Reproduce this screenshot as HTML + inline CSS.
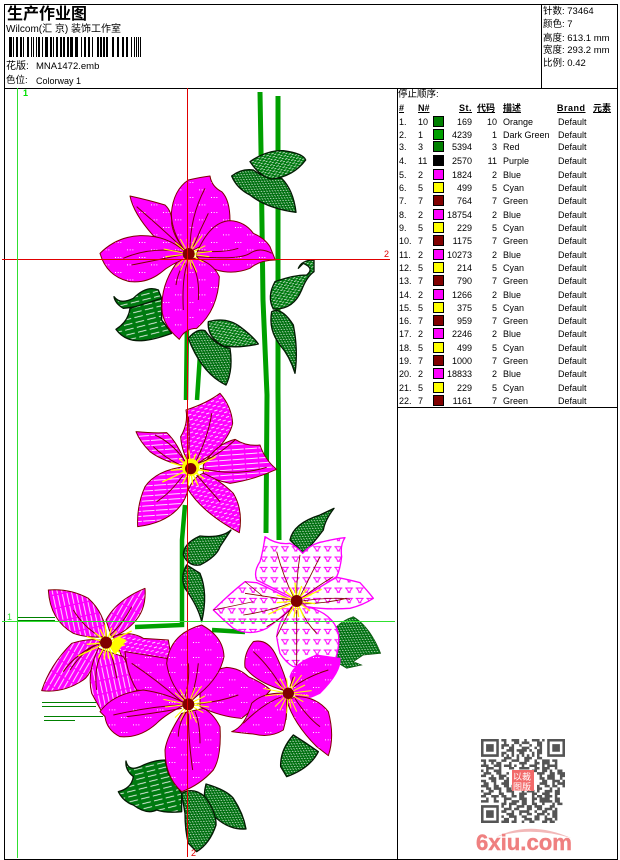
<!DOCTYPE html>
<html><head><meta charset="utf-8"><style>
html,body{margin:0;padding:0;background:#fff}
#p{position:relative;width:620px;height:860px;overflow:hidden;background:#fff;font:9px/12px "Liberation Sans","Noto Sans CJK SC",sans-serif;color:#000}
#p div{position:absolute;white-space:pre}
.r{left:0;width:620px;height:12px}
.r span{position:absolute;top:0}
.a{left:399px}.b{left:418px}.s{left:433px;top:0px!important;width:9px;height:9px;border:1px solid #000}
.c{right:148px}.d{right:123px}.e{left:503px}.f{left:558px}
.h{font-weight:bold;text-decoration:underline}
svg{position:absolute;left:0;top:0}
svg svg{position:static}
</style></head><body><div id="p">
<svg width="620" height="860" viewBox="0 0 620 860">
<defs>
<pattern id="dots" patternUnits="userSpaceOnUse" width="72" height="45"><rect width="72" height="45" fill="#f0f"/><path d="M3 6h3v3H3zM11 6h3v3h-3zM19 6h3v3h-3zM39 28h3v3h-3zM47 28h3v3h-3zM55 28h3v3h-3z" fill="#fff"/></pattern>
<pattern id="hs" patternUnits="userSpaceOnUse" width="40" height="15" patternTransform="rotate(-4)"><rect width="40" height="15" fill="#f0f"/><rect y="6" width="36" height="2.600" fill="#fff"/></pattern>
<pattern id="hd" patternUnits="userSpaceOnUse" width="26" height="15" patternTransform="rotate(-20)"><rect width="26" height="15" fill="#f0f"/><path d="M0 3h10v2.500H0zM13 10h10v2.500H13z" fill="#fff"/></pattern>
<pattern id="vs" patternUnits="userSpaceOnUse" width="14" height="40" patternTransform="rotate(-12)"><rect width="14" height="40" fill="#f0f"/><rect x="5" width="2.600" height="36" fill="#fff"/></pattern>
<pattern id="vs2" patternUnits="userSpaceOnUse" width="14" height="40" patternTransform="rotate(30)"><rect width="14" height="40" fill="#f0f"/><rect x="5" width="2.600" height="36" fill="#fff"/></pattern>
<pattern id="yy" patternUnits="userSpaceOnUse" width="32" height="31"><rect width="32" height="31" fill="#fff"/><path d="M3 4h24M6 4l8 12M24 4l-7 12M11 17h9" stroke="#f0f" stroke-width="3" fill="none"/></pattern>
<pattern id="l1" patternUnits="userSpaceOnUse" width="36" height="15" patternTransform="rotate(-14)"><rect width="36" height="15" fill="#007a10"/><path d="M0 5h26" stroke="#fff" stroke-width="2.500"/></pattern>
<pattern id="l2" patternUnits="userSpaceOnUse" width="16" height="10" patternTransform="rotate(-22)"><rect width="16" height="10" fill="#007a10"/><path d="M0 2h8M8 7h6" stroke="#fff" stroke-width="2.200"/></pattern>
<pattern id="l3" patternUnits="userSpaceOnUse" width="14" height="9" patternTransform="rotate(30)"><rect width="14" height="9" fill="#007010"/><path d="M0 2h5M7 6.500h5" stroke="#fff" stroke-width="2"/></pattern>
<g id="ra" fill="none" stroke="#ff0" stroke-width="3"><path d="M0 0L70 -8M0 0L62 8M0 0L45 25M0 0L25 55M0 0L8 45M0 0L-5 60M0 0L-25 50M0 0L-40 40M0 0L-70 8M0 0L-75 -15M0 0L-40 -35M0 0L-25 -45M0 0L-5 -45M0 0L20 -50M0 0L40 -55M0 0L50 -25"/></g>
<g id="rb" fill="none" stroke="#ff0" stroke-width="4"><path d="M0 0L75 -35M0 0L55 8M0 0L40 30M0 0L22 50M0 0L6 48M0 0L-8 50M0 0L-25 45M0 0L-85 40M0 0L-60 5M0 0L-60 -18M0 0L-35 -30M0 0L-20 -40M0 0L-5 -55M0 0L15 -45M0 0L30 -35M0 0L45 -20"/></g>
</defs>

<!-- stems -->
<g fill="none" stroke="#00a000" stroke-width="5">
<path d="M260 92L261 150 263 300 267 395 266 533"/>
<path d="M278 96L278 390 279 540"/>
<path d="M187 320L186 400M185 505L182 540 182 625 135 627" stroke-width="4.500"/>
<path d="M200 355L197 400M212 630L245 632" stroke-width="4.500"/>
</g>
<g fill="none" stroke="#008000" stroke-width="1" shape-rendering="crispEdges">
<path d="M18 617.500H55M18 620.500H55M42 702.500H96M42 706.500H96M44 716.500H103M44 720.500H75"/>
</g>

<!-- upper section -->
<g transform="translate(90 90) scale(.33333)">
<g stroke="#041a04" stroke-width="4" stroke-linejoin="round">
<path fill="url(#l3)" d="M425 258Q455 235 490 240Q520 265 575 265Q610 300 618 367Q530 355 480 315Q440 295 425 258z"/>
<path fill="url(#l2)" d="M480 215Q530 180 580 182Q640 190 647 210Q610 260 545 267Q510 260 480 215z"/>
<path fill="url(#l2)" d="M625 535Q635 510 672 510L672 545Q650 560 635 600Q610 660 550 657Q530 620 555 575Q610 555 650 555Q675 535 640 520z"/>
<path fill="url(#l3)" d="M545 665Q575 650 610 705Q625 780 615 850Q600 800 570 765Q535 720 545 665z"/>
<path fill="url(#l1)" d="M72 620Q90 645 130 625Q170 585 205 600L215 625Q160 650 100 655Q75 640 72 620z"/>
<path fill="url(#l1)" d="M78 718Q115 695 120 655L215 625L215 690L245 730Q190 750 155 752Q105 755 78 718z"/>
<path fill="url(#l3)" d="M295 745Q320 715 345 722Q380 770 420 775Q430 840 408 885Q335 850 295 745z"/>
<path fill="url(#l2)" d="M355 695Q410 680 450 710Q490 740 505 762Q450 775 400 768Q350 740 355 695z"/>
</g>
<g fill="url(#dots)" stroke="#800000" stroke-width="3" stroke-linejoin="round">
<path d="M285 480Q250 440 245 400Q247 365 225 345Q175 330 120 318Q130 370 190 437z"/>
<path d="M290 490Q245 430 244 370Q250 300 295 270Q330 262 360 258Q365 290 395 305Q420 330 420 392Q370 430 330 470z"/>
<path d="M320 490Q360 395 420 392Q465 395 490 430Q525 445 540 470L556 510Q510 510 480 535Q430 555 380 540Q340 525 320 500z"/>
<path d="M270 505Q218 570 216 640Q210 700 268 748Q285 715 320 715Q385 660 388 560Q370 520 320 505z"/>
<path d="M30 490Q80 440 150 437Q230 435 285 485L290 505Q245 520 210 550Q170 580 120 575Q50 560 30 490z"/>
</g>
<g fill="none" stroke="#800000" stroke-width="3">
<path d="M285 480Q220 420 180 385T140 350M300 480Q300 380 345 295M310 470Q330 420 355 370M320 482Q400 490 445 475M320 500Q450 510 480 490T545 490M275 485Q180 470 100 505M275 495Q200 510 125 525M295 510Q275 560 280 660M305 520Q330 560 325 630M285 520Q265 540 258 585"/>
</g>
<use href="#ra" x="296" y="492"/>
<circle cx="296" cy="492" r="18" fill="#800000"/>
</g>

<!-- middle section -->
<g transform="translate(120 380) scale(.33333)">
<g stroke="#041a04" stroke-width="4" stroke-linejoin="round">
<path fill="url(#l3)" d="M333 450Q305 475 240 468Q190 490 190 525Q205 560 240 555Q290 530 300 500z"/>
<path fill="url(#l3)" d="M200 555Q180 590 195 625Q235 680 245 725Q265 640 240 580z"/>
<path fill="url(#l3)" d="M510 480Q520 430 600 405L642 385Q615 420 610 450Q580 490 550 520z"/>
</g>
<g stroke="#800000" stroke-width="3" stroke-linejoin="round">
<path fill="url(#hd)" d="M215 262Q185 220 182 170Q205 130 198 90Q260 70 300 40Q335 80 338 130Q330 170 280 220z"/>
<path fill="url(#hs)" d="M250 255Q290 190 345 178Q380 200 420 195Q435 240 470 268Q400 300 330 310Q280 300 250 280z"/>
<path fill="url(#hd)" d="M205 330Q250 400 358 458Q370 390 340 340Q300 300 250 280Q220 290 205 330z"/>
<path fill="url(#hs)" d="M48 155Q100 160 140 158Q175 190 200 260Q130 245 90 215Q60 185 48 155z"/>
<path fill="url(#hs)" d="M195 260Q110 270 75 320Q50 375 53 440Q130 430 170 390Q200 360 205 320z"/>
</g>
<g fill="none" stroke="#800000" stroke-width="3">
<path d="M200 250Q160 190 105 165M225 250Q265 170 275 100M205 240Q210 170 205 110M240 265Q350 290 440 262M235 250Q290 230 345 180M230 285Q270 330 300 365M190 285Q150 340 110 365M180 255Q130 230 100 200"/>
</g>
<circle cx="212" cy="262" r="26" fill="#ff0"/>
<use href="#rb" x="212" y="266"/>
<circle cx="212" cy="266" r="17" fill="#800000"/>
</g>

<!-- rear leaf of flower 3 -->
<g transform="translate(0 580) scale(.33333)">
<path stroke="#0a500a" stroke-width="2" fill="url(#l3)" d="M1010 140Q1030 120 1060 110Q1110 140 1142 220L1090 225L1060 245L1085 255L1040 265L990 235Q1020 200 1010 140z"/>
</g>

<!-- flower 3 -->
<g transform="translate(120 380) scale(.33333)">
<g fill="url(#yy)" stroke="#f0f" stroke-width="4" stroke-linejoin="round">
<path d="M530 670Q480 700 470 770Q475 800 480 820Q500 850 520 860L600 850Q640 850 645 840Q660 800 655 760Q640 700 560 680z"/>
<path d="M530 660L410 600Q400 575 420 545Q430 510 435 470Q470 495 510 490Q530 500 548 520Q575 490 610 485Q650 475 675 473Q660 495 665 530Q660 570 650 590Q590 630 530 660z"/>
<path d="M540 660Q600 620 650 592Q690 600 720 608Q745 635 760 655Q730 675 690 685Q620 690 560 680z"/>
<path d="M525 665Q460 630 410 608L375 605Q330 640 280 690Q310 720 340 745Q390 770 440 745Q490 710 525 670z"/>
</g>
<g fill="none" stroke="#800000" stroke-width="2.500">
<path d="M520 650Q490 590 470 515M530 645Q530 590 540 525M540 650Q570 590 600 530M545 655Q590 620 640 590M550 662Q650 650 690 658M545 672Q620 670 680 655M510 660Q440 650 375 640M510 670Q440 695 370 705M520 680Q480 720 440 740M530 690Q530 760 530 860M540 685Q560 730 590 760M515 680Q490 730 470 770"/>
<path d="M375 605L430 650M280 690L400 665" stroke-width="2"/>
</g>
<use href="#rb" x="530" y="663"/>
<circle cx="530" cy="663" r="18" fill="#800000"/>
</g>

<!-- lower section -->
<g transform="translate(0 580) scale(.33333)">
<g stroke="#041a04" stroke-width="4" stroke-linejoin="round">
<path fill="url(#l1)" d="M378 543Q385 575 420 560Q460 540 495 540L505 580L545 640L545 695Q500 700 470 690Q440 705 400 675Q370 665 355 635Q395 625 400 590Q375 570 378 543z"/>
<path fill="url(#l3)" d="M618 612Q680 630 700 655Q730 700 738 747Q690 750 650 715Q600 680 618 612z"/>
<path fill="url(#l3)" d="M545 640Q580 620 615 650Q650 700 648 735Q630 790 590 815L565 790Q555 750 555 700z"/>
<path fill="url(#l3)" d="M880 465Q840 510 842 560L860 590Q930 565 955 515Q920 490 880 465z"/>
</g>
<!-- flower 4 -->
<g stroke="#800000" stroke-width="3" stroke-linejoin="round">
<path fill="url(#vs)" d="M145 30Q210 25 265 55Q315 100 320 170Q260 175 220 160Q150 120 145 30z"/>
<path fill="url(#vs2)" d="M318 120Q350 60 435 25Q440 90 400 130Q370 160 335 172z"/>
<path fill="url(#hd)" d="M340 170Q390 150 430 175L505 180L515 240L370 240z"/>
<path fill="url(#vs2)" d="M125 332Q150 255 215 190Q260 175 300 180Q280 280 250 300Q190 340 125 332z"/>
<path fill="url(#vs)" d="M295 205Q260 280 275 340L305 395L420 325L370 230z"/>
</g>
<g fill="none" stroke="#800000" stroke-width="3">
<path d="M300 170Q250 140 220 90M330 165Q370 130 395 80M285 195Q220 230 190 275M310 210Q280 260 290 330M330 210Q345 260 350 295M300 190Q250 210 210 270"/>
</g>
<use href="#rb" x="320" y="188"/>
<path d="M325 195L355 170 380 180 345 225z" fill="#ff0"/>
<circle cx="318" cy="188" r="18" fill="#800000"/>
<!-- flower 5 -->
<g fill="url(#dots)" stroke="#800000" stroke-width="3" stroke-linejoin="round">
<path d="M375 215Q440 225 500 235Q515 300 565 372Q470 335 410 330Q380 280 375 215z"/>
<path d="M600 340Q620 270 680 262Q720 265 745 290Q790 310 812 330Q770 380 725 415Q660 410 600 380z"/>
<path d="M565 370Q510 320 500 250Q510 160 605 135Q670 170 672 230Q660 290 600 340z"/>
<path d="M300 395Q340 340 430 330Q500 340 560 372Q500 400 470 430Q420 475 360 470Q320 450 315 410z"/>
<path d="M545 400Q500 470 495 510Q495 590 545 635Q600 615 640 570Q665 530 660 440Q640 400 610 385z"/>
</g>
<g fill="none" stroke="#800000" stroke-width="3">
<path d="M545 365Q470 300 395 250M555 350Q570 300 565 250M575 350Q590 300 595 250M590 372Q660 365 715 345M540 375Q450 380 340 405M545 385Q460 400 380 410M560 395Q535 430 535 470M565 400Q565 480 578 570M585 395Q600 430 600 490"/>
</g>
<use href="#ra" x="565" y="373"/>
<circle cx="565" cy="373" r="18" fill="#800000"/>
<!-- flower 6 -->
<path fill="url(#dots)" stroke="#f0f" stroke-width="3" d="M870 290Q880 250 950 225L1020 235Q1025 275 960 340Q920 360 890 362z"/>
<g fill="url(#dots)" stroke="#800000" stroke-width="3" stroke-linejoin="round">
<path d="M865 330Q855 280 825 220Q800 175 760 185Q730 220 735 262Q770 310 865 335z"/>
<path d="M860 360Q880 430 950 500L985 527Q1005 470 985 395Q950 350 890 350z"/>
<path d="M695 455Q735 440 755 370Q790 335 860 340Q865 400 850 450Q810 475 760 462Q730 460 695 455z"/>
</g>
<g fill="none" stroke="#800000" stroke-width="3">
<path d="M850 330Q810 260 760 215M875 325Q920 290 985 270M845 350Q790 370 730 430M885 355Q920 410 960 440M860 360Q860 400 858 420M880 290L870 320"/>
</g>
<use href="#ra" x="865" y="340"/>
<circle cx="865" cy="340" r="17" fill="#800000"/>
</g>

<!-- frame -->
<g stroke="#000" fill="none" shape-rendering="crispEdges">
<rect x="4.500" y="4.500" width="613" height="855" stroke-width="1"/>
<path d="M4 88.500H618M541.500 4V88M397.500 88V860M397 407.500H618"/>
</g>
<!-- guides -->
<g shape-rendering="crispEdges" fill="none">
<path d="M187.500 88V857M2 259.500H390" stroke="#e00000"/>
<path d="M17.500 88V858M2 621.500H395" stroke="#30e030"/>
</g>
<!-- barcode -->
<g fill="#000" shape-rendering="crispEdges">
<path d="M9 37h3v20h-3zM13 37h1v20h-1zM16 37h2v20h-2zM20 37h2v20h-2zM23 37h1v20h-1zM27 37h2v20h-2zM31 37h1v20h-1zM33 37h1v20h-1zM36 37h1v20h-1zM38 37h2v20h-2zM42 37h1v20h-1zM45 37h3v20h-3zM50 37h2v20h-2zM53 37h1v20h-1zM56 37h2v20h-2zM60 37h2v20h-2zM63 37h2v20h-2zM67 37h2v20h-2zM70 37h3v20h-3zM75 37h3v20h-3zM81 37h1v20h-1zM84 37h2v20h-2zM88 37h2v20h-2zM92 37h1v20h-1zM97 37h2v20h-2zM100 37h2v20h-2zM103 37h2v20h-2zM106 37h2v20h-2zM112 37h2v20h-2zM117 37h2v20h-2zM122 37h2v20h-2zM126 37h2v20h-2zM131 37h1v20h-1zM134 37h1v20h-1zM136 37h1v20h-1zM138 37h1v20h-1zM140 37h1v20h-1z"/>
</g>
<!-- QR -->
<svg x="481" y="739" width="84" height="84" viewBox="0 0 33 33" overflow="hidden">
<g fill="none" stroke="#555">
<path stroke-width="1" d="M.5 .5h6v6h-6zM26.500 .5h6v6h-6zM.5 26.500h6v6h-6z"/>
<path stroke-width="0" fill="#555" d="M2 2h3v3H2zM28 2h3v3h-3zM2 28h3v3H2z"/>
<path d="M8 .5h2m2 0h3m2 0h1m2 0h3m1 0h1M9 1.500h1m3 0h2m1 0h3m3 0h2M8 2.500h3m1 0h1m2 0h1m3 0h1m2 0h2M8 3.500h1m2 0h2m3 0h3m2 0h1m1 0h1M10 4.500h3m1 0h4m1 0h1m2 0h2M8 5.500h2m2 0h1m2 0h2m3 0h1m1 0h2M8 6.500h1m1 0h1m1 0h1m1 0h1m1 0h1m1 0h1m1 0h1m1 0h1M9 7.500h3m2 0h1m2 0h3m2 0h2M0 8.500h2m1 0h3m2 0h2m2 0h3m2 0h2m2 0h1m2 0h3m1 0h2M1 9.500h1m2 0h1m1 0h2m3 0h1m3 0h3m3 0h2m1 0h3m2 0h1M0 10.500h3m2 0h3m1 0h3m1 0h1m2 0h1m2 0h3m2 0h1m1 0h4M2 11.500h3m2 0h1m3 0h2m2 0h4m2 0h2m1 0h3m2 0h1M0 12.500h1m1 0h1m2 0h3m3 0m9 0h2m2 0h2m1 0h1m2 0h2M1 13.500h3m2 0h2m2 0h1m11 0h3m2 0h2m1 0h3M0 14.500h2m2 0h1m2 0h3m13 0h1m2 0h3m2 0h3M3 15.500h3m1 0h2m1 0h1m12 0h2m1 0h3m2 0h1M0 16.500h2m2 0h2m3 0h2m13 0h2m2 0h3m1 0h2M1 17.500h2m2 0h1m2 0h3m12 0h3m2 0h1m1 0h3M0 18.500h3m2 0h2m2 0h2m1 0h1m9 0h1m2 0h2m1 0h2m2 0h2M2 19.500h2m1 0h3m2 0h2m2 0h3m1 0h2m2 0h2m3 0h1m2 0h1M0 20.500h1m2 0h2m2 0h1m2 0h3m3 0h1m1 0h3m1 0h1m2 0h3m1 0h2M1 21.500h3m3 0h2m3 0h1m2 0h3m2 0h2m2 0h3m2 0h2M0 22.500h2m2 0h3m1 0h2m2 0h2m1 0h2m3 0h1m1 0h2m1 0h3m1 0h1M2 23.500h1m2 0h1m3 0h3m3 0h3m2 0h2m1 0h4m2 0h2M0 24.500h3m2 0h2m2 0h1m2 0h3m1 0h2m2 0h1m2 0h5m1 0h2M8 25.500h2m1 0h3m2 0h2m2 0h2m2 0h1m3 0h1m1 0h2M8 26.500h1m2 0h1m2 0h3m1 0h2m1 0h3m3 0h2M9 27.500h3m1 0h2m3 0h2m2 0h2m1 0h3m1 0h1M8 28.500h2m2 0h1m2 0h4m2 0h1m2 0h2m2 0h2M10 29.500h3m2 0h1m2 0h2m2 0h3m1 0h1m1 0h2M8 30.500h1m2 0h3m2 0h2m3 0h2m2 0h1m2 0h2M9 31.500h2m2 0h1m3 0h3m1 0h2m2 0h3m1 0h1M8 32.500h3m1 0h2m2 0h1m2 0h2m3 0h2m1 0h2"/>
</g>
</svg>
<rect x="512" y="770" width="22" height="21" fill="#f26a6a"/>
<text x="513" y="780" font-size="9" fill="#fff" font-family="'Noto Sans CJK SC',sans-serif">以裁</text>
<text x="513" y="790" font-size="9" fill="#fff" font-family="'Noto Sans CJK SC',sans-serif">图版</text>
<!-- logo -->
<path d="M496 837Q530 820 571 838Q530 826 496 837z" fill="#f2b8b8"/>
<text x="476" y="850" font-size="22" font-weight="bold" font-family="'Liberation Sans',sans-serif" fill="#ef8080" stroke="#ef8080" stroke-width=".4" textLength="96" lengthAdjust="spacingAndGlyphs">6xiu.com</text>
</svg>

<div style="left:7px;top:3px;font:bold 16px/18px 'Noto Sans CJK SC',sans-serif">生产作业图</div>
<div style="left:6px;top:24px;font-size:10px">Wilcom(汇 京) 装饰工作室</div>
<div style="left:6px;top:61px;font-size:10px">花版:</div>
<div style="left:36px;top:61px;font-size:9.500px">MNA1472.emb</div>
<div style="left:6px;top:75px;font-size:9.500px">色位:</div>
<div style="left:36px;top:75px;font-size:9px">Colorway 1</div>
<div style="left:543px;top:6px;font-size:9.500px">针数: 73464</div>
<div style="left:543px;top:19px;font-size:9.500px">颜色: 7</div>
<div style="left:543px;top:33px;font-size:9.500px">高度: 613.1 mm</div>
<div style="left:543px;top:45px;font-size:9.500px">宽度: 293.2 mm</div>
<div style="left:543px;top:58px;font-size:9.500px">比例: 0.42</div>
<div style="left:398px;top:89px;font-size:9.500px">停止顺序:</div>
<div class="h" style="left:399px;top:102px">#</div>
<div class="h" style="left:418px;top:102px">N#</div>
<div class="h" style="left:459px;top:102px;letter-spacing:.5px">St.</div>
<div class="h" style="left:477px;top:102px">代码</div>
<div class="h" style="left:503px;top:102px">描述</div>
<div class="h" style="left:557px;top:102px;letter-spacing:.5px">Brand</div>
<div class="h" style="left:593px;top:102px">元素</div>

<div style="left:23px;top:87px;color:#00e000;font-weight:bold">1</div>
<div style="left:384px;top:248px;color:#e00000">2</div>
<div style="left:7px;top:611px;color:#30e030">1</div>
<div style="left:191px;top:847px;color:#e00000">2</div>

<div class="r" style="top:116px"><span class="a">1.</span><span class="b">10</span><span class="s" style="background:#008000"></span><span class="c">169</span><span class="d">10</span><span class="e">Orange</span><span class="f">Default</span></div>
<div class="r" style="top:129px"><span class="a">2.</span><span class="b">1</span><span class="s" style="background:#00a000"></span><span class="c">4239</span><span class="d">1</span><span class="e">Dark Green</span><span class="f">Default</span></div>
<div class="r" style="top:141px"><span class="a">3.</span><span class="b">3</span><span class="s" style="background:#008000"></span><span class="c">5394</span><span class="d">3</span><span class="e">Red</span><span class="f">Default</span></div>
<div class="r" style="top:155px"><span class="a">4.</span><span class="b">11</span><span class="s" style="background:#000"></span><span class="c">2570</span><span class="d">11</span><span class="e">Purple</span><span class="f">Default</span></div>
<div class="r" style="top:169px"><span class="a">5.</span><span class="b">2</span><span class="s" style="background:#f0f"></span><span class="c">1824</span><span class="d">2</span><span class="e">Blue</span><span class="f">Default</span></div>
<div class="r" style="top:182px"><span class="a">6.</span><span class="b">5</span><span class="s" style="background:#ff0"></span><span class="c">499</span><span class="d">5</span><span class="e">Cyan</span><span class="f">Default</span></div>
<div class="r" style="top:195px"><span class="a">7.</span><span class="b">7</span><span class="s" style="background:#800000"></span><span class="c">764</span><span class="d">7</span><span class="e">Green</span><span class="f">Default</span></div>
<div class="r" style="top:209px"><span class="a">8.</span><span class="b">2</span><span class="s" style="background:#f0f"></span><span class="c">18754</span><span class="d">2</span><span class="e">Blue</span><span class="f">Default</span></div>
<div class="r" style="top:222px"><span class="a">9.</span><span class="b">5</span><span class="s" style="background:#ff0"></span><span class="c">229</span><span class="d">5</span><span class="e">Cyan</span><span class="f">Default</span></div>
<div class="r" style="top:235px"><span class="a">10.</span><span class="b">7</span><span class="s" style="background:#800000"></span><span class="c">1175</span><span class="d">7</span><span class="e">Green</span><span class="f">Default</span></div>
<div class="r" style="top:249px"><span class="a">11.</span><span class="b">2</span><span class="s" style="background:#f0f"></span><span class="c">10273</span><span class="d">2</span><span class="e">Blue</span><span class="f">Default</span></div>
<div class="r" style="top:262px"><span class="a">12.</span><span class="b">5</span><span class="s" style="background:#ff0"></span><span class="c">214</span><span class="d">5</span><span class="e">Cyan</span><span class="f">Default</span></div>
<div class="r" style="top:275px"><span class="a">13.</span><span class="b">7</span><span class="s" style="background:#800000"></span><span class="c">790</span><span class="d">7</span><span class="e">Green</span><span class="f">Default</span></div>
<div class="r" style="top:289px"><span class="a">14.</span><span class="b">2</span><span class="s" style="background:#f0f"></span><span class="c">1266</span><span class="d">2</span><span class="e">Blue</span><span class="f">Default</span></div>
<div class="r" style="top:302px"><span class="a">15.</span><span class="b">5</span><span class="s" style="background:#ff0"></span><span class="c">375</span><span class="d">5</span><span class="e">Cyan</span><span class="f">Default</span></div>
<div class="r" style="top:315px"><span class="a">16.</span><span class="b">7</span><span class="s" style="background:#800000"></span><span class="c">959</span><span class="d">7</span><span class="e">Green</span><span class="f">Default</span></div>
<div class="r" style="top:328px"><span class="a">17.</span><span class="b">2</span><span class="s" style="background:#f0f"></span><span class="c">2246</span><span class="d">2</span><span class="e">Blue</span><span class="f">Default</span></div>
<div class="r" style="top:342px"><span class="a">18.</span><span class="b">5</span><span class="s" style="background:#ff0"></span><span class="c">499</span><span class="d">5</span><span class="e">Cyan</span><span class="f">Default</span></div>
<div class="r" style="top:355px"><span class="a">19.</span><span class="b">7</span><span class="s" style="background:#800000"></span><span class="c">1000</span><span class="d">7</span><span class="e">Green</span><span class="f">Default</span></div>
<div class="r" style="top:368px"><span class="a">20.</span><span class="b">2</span><span class="s" style="background:#f0f"></span><span class="c">18833</span><span class="d">2</span><span class="e">Blue</span><span class="f">Default</span></div>
<div class="r" style="top:382px"><span class="a">21.</span><span class="b">5</span><span class="s" style="background:#ff0"></span><span class="c">229</span><span class="d">5</span><span class="e">Cyan</span><span class="f">Default</span></div>
<div class="r" style="top:395px"><span class="a">22.</span><span class="b">7</span><span class="s" style="background:#800000"></span><span class="c">1161</span><span class="d">7</span><span class="e">Green</span><span class="f">Default</span></div>
</div></body></html>
